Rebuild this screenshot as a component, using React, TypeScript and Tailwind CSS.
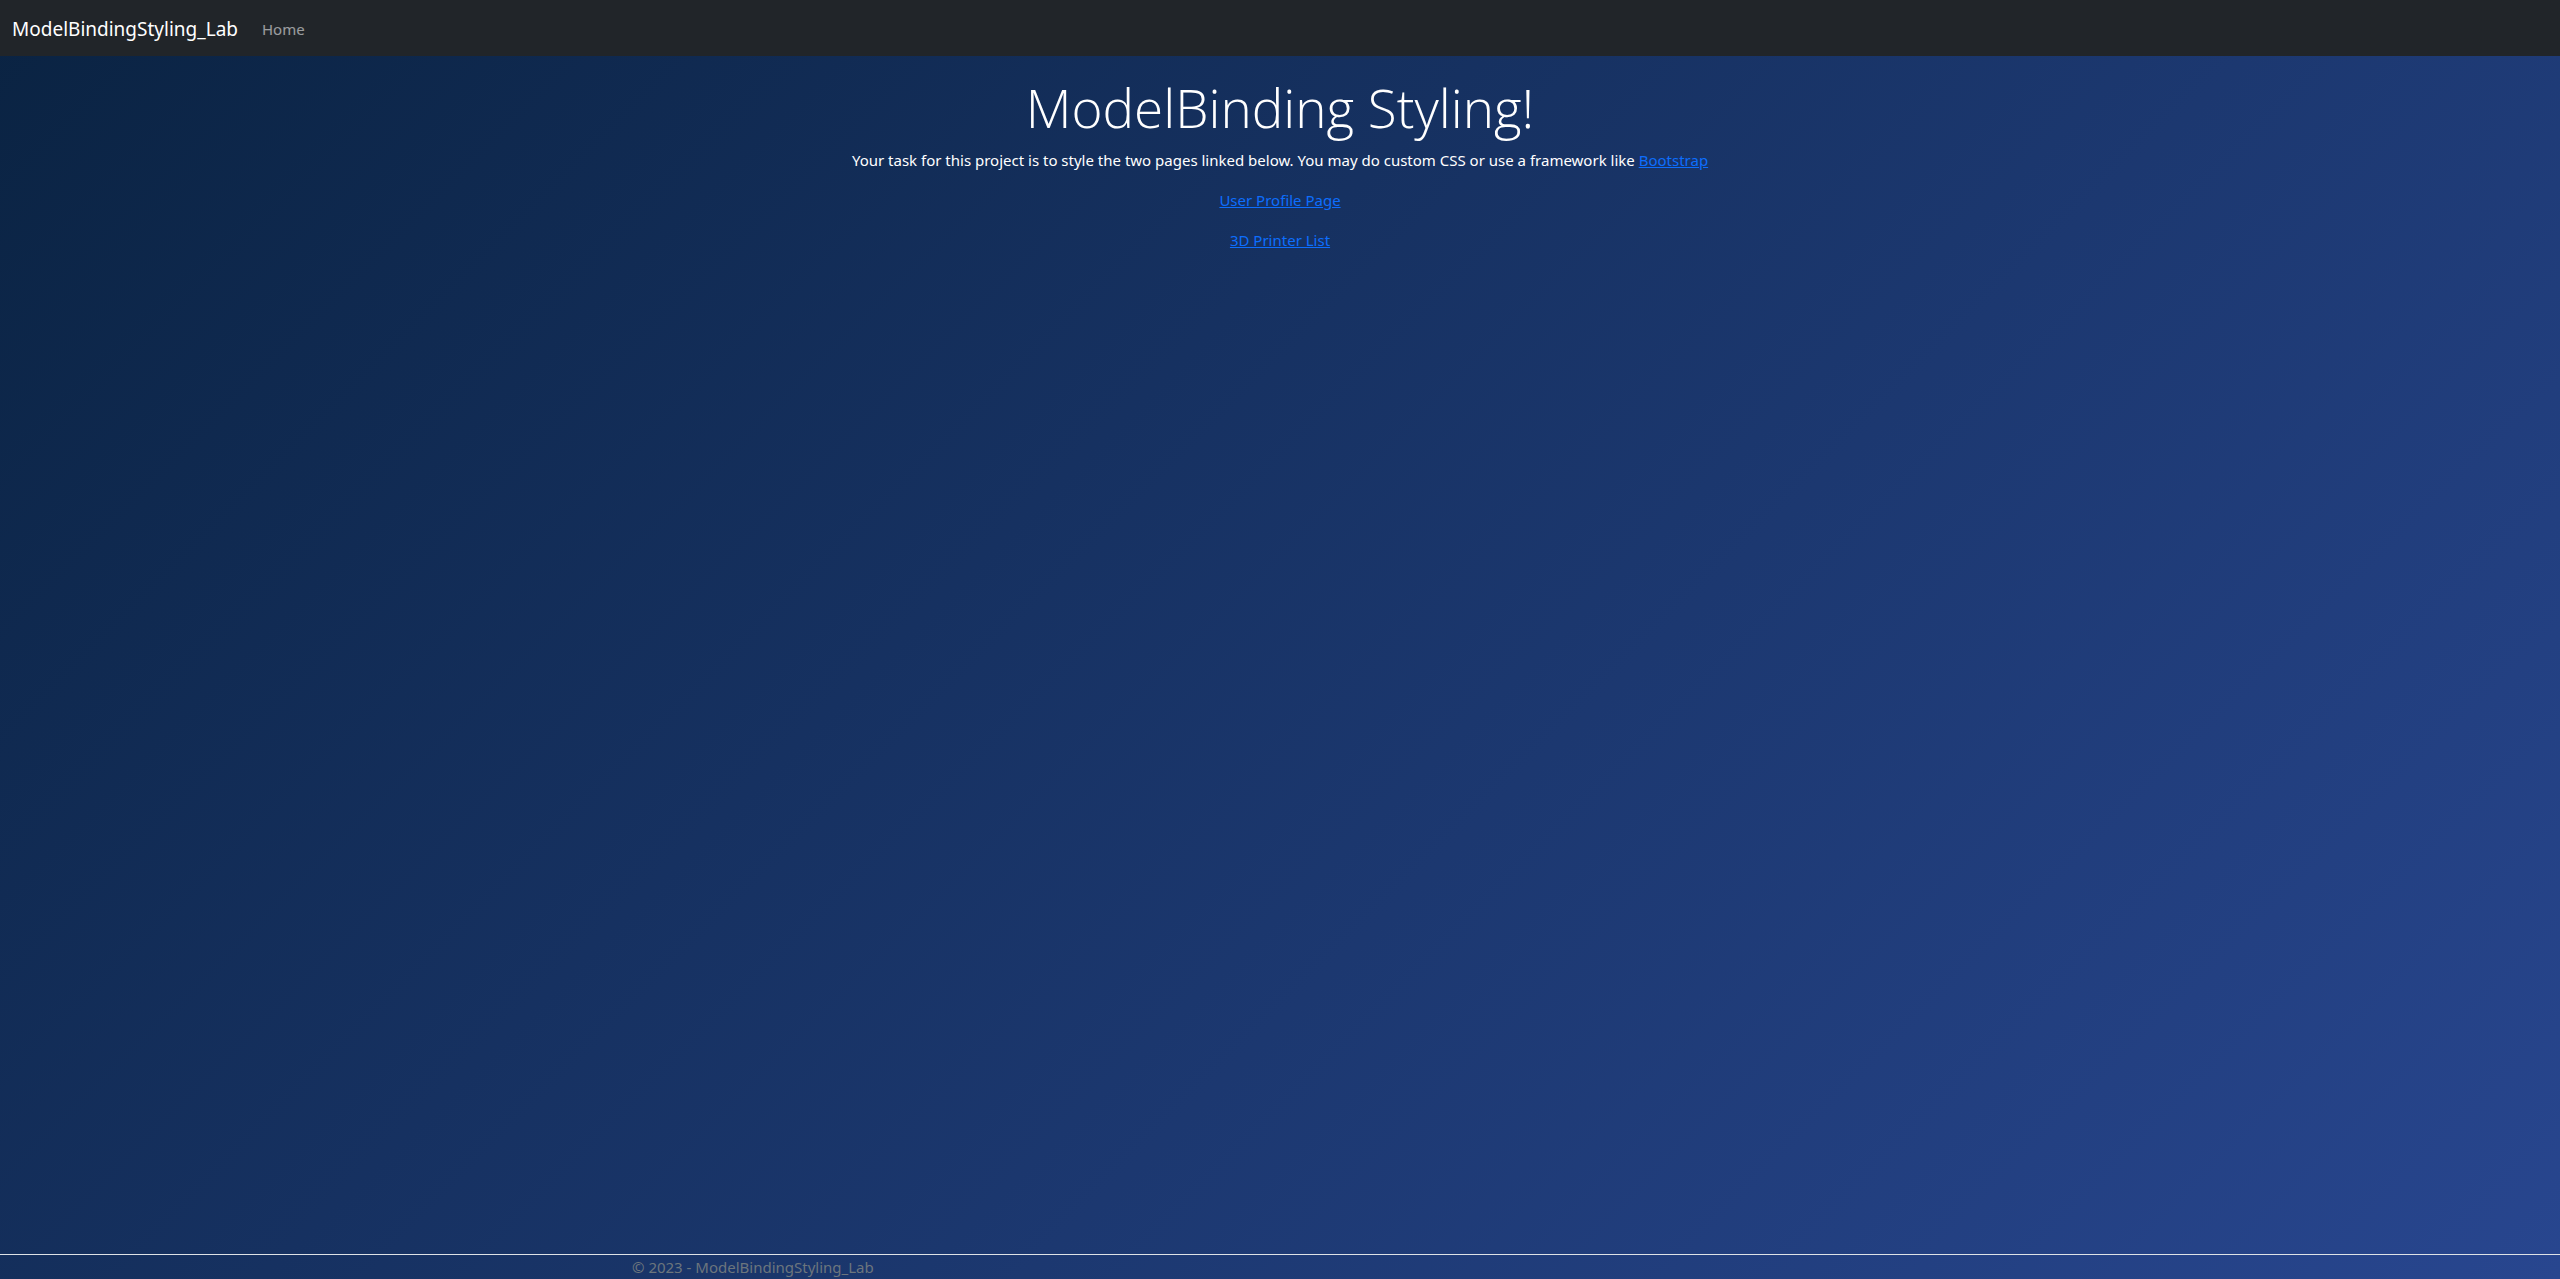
export default function App() {
  return (
    <div className="flex min-h-screen flex-col bg-[linear-gradient(135deg,#0a2342,#28468f)] font-['Segoe_UI','Noto_Sans','Open_Sans',sans-serif] text-[15px] leading-6 text-white">
      <header className="mb-4">
        <nav className="flex items-center bg-[#212529] px-3 pt-[9px] pb-[7px]">
          <a href="#" className="mr-4 py-1 text-[19px] leading-8 text-white">ModelBindingStyling_Lab</a>
          <a href="#" className="p-2 text-white/55">Home</a>
        </nav>
      </header>
      <main className="flex grow flex-col items-center pt-1 pb-4 text-center">
        <h1 className="mb-2 font-['Segoe_UI_Light','Open_Sans',sans-serif] text-[53px] leading-16 font-light">ModelBinding Styling!</h1>
        <p className="mb-4">
          Your task for this project is to style the two pages linked below. You may do custom CSS or use a framework like{" "}
          <a href="#" className="text-[#0d6efd] underline">Bootstrap</a>
        </p>
        <a href="#" className="mb-4 text-[#0d6efd] underline">User Profile Page</a>
        <a href="#" className="text-[#0d6efd] underline">3D Printer List</a>
      </main>
      <footer className="border-t border-[#dee2e6] text-[#6c757d]">
        <div className="mx-auto max-w-[1320px] px-3">© 2023 - ModelBindingStyling_Lab</div>
      </footer>
    </div>
  );
}
